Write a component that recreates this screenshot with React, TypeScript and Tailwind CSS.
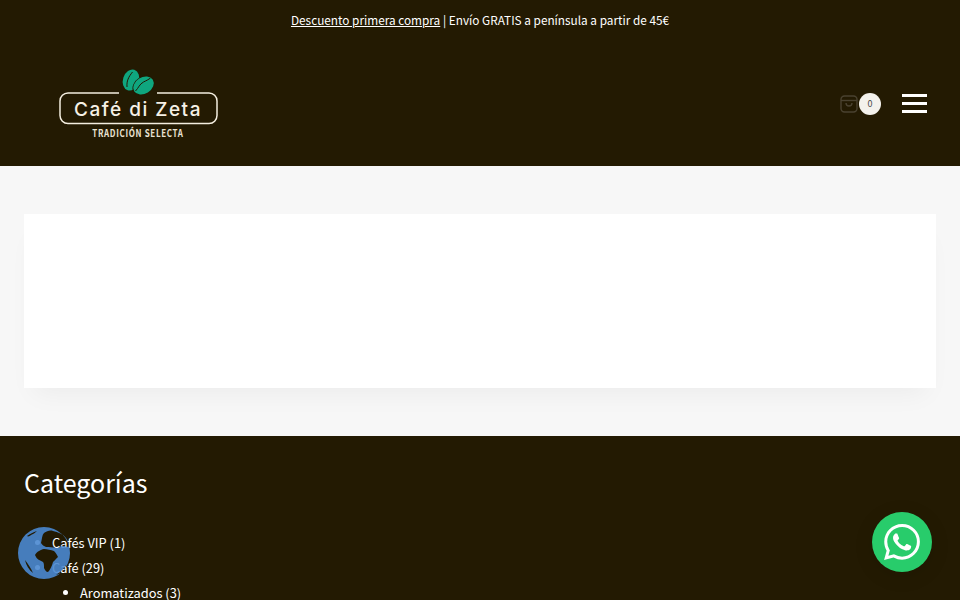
const font = { fontFamily: '"Noto Sans CJK JP", "Noto Sans", sans-serif' };

function Logo() {
  return (
    <div className="relative h-[72px] w-[160px]">
      <svg className="absolute left-0 top-0" width="160" height="70" viewBox="0 0 160 70" fill="none">
        <path d="M61 27H10a8 8 0 0 0-8 8v14.500a8 8 0 0 0 8 8h141a8 8 0 0 0 8-8V35a8 8 0 0 0-8-8H99" stroke="#f4eee0" strokeWidth="1.500" />
        <ellipse cx="73" cy="14" rx="8" ry="10.800" transform="rotate(18 73 14)" fill="#0fa67f" />
        <ellipse cx="85.500" cy="19.500" rx="11.800" ry="8.800" transform="rotate(-32 85.500 19.500)" fill="#231a02" />
        <ellipse cx="85.500" cy="19.500" rx="11" ry="8.200" transform="rotate(-32 85.500 19.500)" fill="#0fa67f" />
        <path d="M69 21C68.500 15 70.500 11 74.500 6" stroke="#231a02" strokeWidth="1" />
        <path d="M77.500 25C80.500 22 81.500 18 85.500 16C88.500 14.500 90.500 13.500 92.500 12" stroke="#231a02" strokeWidth="1" />
      </svg>
      <div className="absolute left-0 top-[32px] flex h-[24px] w-[160px] items-center justify-center whitespace-nowrap text-[19px] font-medium tracking-[1.500px] text-[#f6f1e6]" style={{ fontFamily: '"Inter", sans-serif' }}>
        Café di Zeta
      </div>
      <div className="absolute left-0 top-[61px] flex h-[12px] w-[160px] scale-y-[1.300] items-center justify-center whitespace-nowrap text-[8px] font-bold tracking-[0.660px] text-[#e9e2d2]" style={font}>
        TRADICIÓN SELECTA
      </div>
    </div>
  );
}

function WhatsApp() {
  return (
    <svg width="36" height="36" viewBox="0 0 24 24" fill="#ffffff">
      <path d="M17.472 14.382c-.297-.149-1.758-.867-2.03-.967-.273-.099-.471-.148-.67.15-.197.297-.767.966-.94 1.164-.173.199-.347.223-.644.075-.297-.15-1.255-.463-2.39-1.475-.883-.788-1.48-1.761-1.653-2.059-.173-.297-.018-.458.13-.606.134-.133.298-.347.446-.52.149-.174.198-.298.298-.497.099-.198.05-.371-.025-.52-.075-.149-.669-1.612-.916-2.207-.242-.579-.487-.5-.669-.51-.173-.008-.371-.01-.57-.01-.198 0-.52.074-.792.372-.272.297-1.04 1.016-1.04 2.479 0 1.462 1.065 2.875 1.213 3.074.149.198 2.096 3.2 5.077 4.487.709.306 1.262.489 1.694.625.712.227 1.36.195 1.871.118.571-.085 1.758-.719 2.006-1.413.248-.694.248-1.289.173-1.413-.074-.124-.272-.198-.57-.347m-5.421 7.403h-.004a9.870 9.870 0 0 1-5.031-1.378l-.361-.214-3.741.982.998-3.648-.235-.374a9.860 9.860 0 0 1-1.510-5.260c.001-5.450 4.436-9.884 9.888-9.884 2.640 0 5.122 1.030 6.988 2.898a9.825 9.825 0 0 1 2.893 6.994c-.003 5.450-4.437 9.884-9.885 9.884m8.413-18.297A11.815 11.815 0 0 0 12.050 0C5.495 0 .160 5.335.157 11.892c0 2.096.547 4.142 1.588 5.945L.057 24l6.305-1.654a11.882 11.882 0 0 0 5.683 1.448h.005c6.554 0 11.890-5.335 11.893-11.893a11.821 11.821 0 0 0-3.480-8.413z" />
    </svg>
  );
}

function Globe() {
  const disc = "M27 1a26 26 0 1 0 0 52a26 26 0 1 0 0-52Z";
  const africa = "M18 29C19 27 20 26 22 25C24 24 25 23 27 23C30 23 34 24 37 25C39 27 40 29 41 31C39 33 38 34 36 36C35 40 33 44 31 46C29 46 28 44 27 42C27 39 27 37 26 36C24 35 23 34 22 34C20 33 19 31 18 29Z";
  const eurasia = "M24 17C25 13 25 9 27 7C30 5 33 4 36 5C41 6 46 8 49 12C51 15 52 18 52 21C49 21 45 19 43 21C41 22 40 22 39 22C36 21 32 21 29 21C27 20 25 19 24 17Z";
  const americaTop = "M10 10C13 8 16 6 20 5C18 7 16 8 14 9C13 10 11 11 10 10Z";
  const americaLow = "M8 34C11 38 14 42 16 47C12 44 9 39 8 34Z";
  const right = "M39 49C43 46 47 43 49 39C49 43 45 47 39 49Z";
  return (
    <svg width="54" height="54" viewBox="0 0 54 54">
      <path d={[disc, africa, eurasia, americaTop, americaLow, right].join(" ")} fillRule="evenodd" fill="#4a88d0" fillOpacity="0.9" />
    </svg>
  );
}

function Cart() {
  return (
    <svg width="18" height="18" viewBox="0 0 18 18" fill="none" stroke="#4a4230" strokeWidth="1.400">
      <rect x="1" y="1" width="16" height="16" rx="3.500" />
      <path d="M1 5.500H17" />
      <path d="M6 8c0 4 6 4 6 0" />
    </svg>
  );
}

export default function App() {
  return (
    <div className="relative h-[600px] w-[960px] overflow-hidden bg-[#231a02]" style={font}>
      <header className="flex h-[166px] flex-col bg-[#231a02] text-white">
        <div className="flex h-[39px] items-center justify-center text-[11.800px] leading-[21px] text-white">
          <span className="underline">Descuento primera compra</span>
          <span className="whitespace-pre"> | Envío GRATIS a península a partir de 45€</span>
        </div>
        <div className="flex flex-1 items-center justify-between pb-[1px] pl-[58px] pr-[33px]">
          <Logo />
          <div className="flex items-center pt-[3px]">
            <Cart />
            <span className="ml-[1px] flex h-[22px] w-[22px] items-center justify-center rounded-full bg-[#f3f1ec] text-[9px] text-[#4a4a4a]">0</span>
            <div className="ml-[21px] flex w-[25px] flex-col gap-[5.500px]">
              <span className="h-[2.500px] bg-white" />
              <span className="h-[2.500px] bg-white" />
              <span className="h-[2.500px] bg-white" />
            </div>
          </div>
        </div>
      </header>

      <main className="h-[270px] bg-[#f7f7f7] px-[24px] pt-[48px]">
        <div className="h-[174px] bg-white shadow-[0_15px_25px_-10px_rgba(0,0,0,0.05)]" />
      </main>

      <footer className="bg-[#231a02] px-[24px] pt-[26px] text-white">
        <h2 className="text-[25px] font-normal leading-[40px]">Categorías</h2>
        <ul className="mt-[28px] list-disc pl-[28px] text-[12.850px] leading-[25px]">
          <li>Cafés VIP (1)</li>
          <li>
            Café (29)
            <ul className="list-disc pl-[28px]">
              <li>Aromatizados (3)</li>
            </ul>
          </li>
        </ul>
      </footer>

      <div className="absolute left-[17px] top-[526px]">
        <Globe />
      </div>
      <div className="absolute left-[872px] top-[512px] flex h-[60px] w-[60px] items-center justify-center rounded-full bg-[#28cc6b] shadow-[0_4px_20px_rgba(0,0,0,0.1)]">
        <WhatsApp />
      </div>
    </div>
  );
}
